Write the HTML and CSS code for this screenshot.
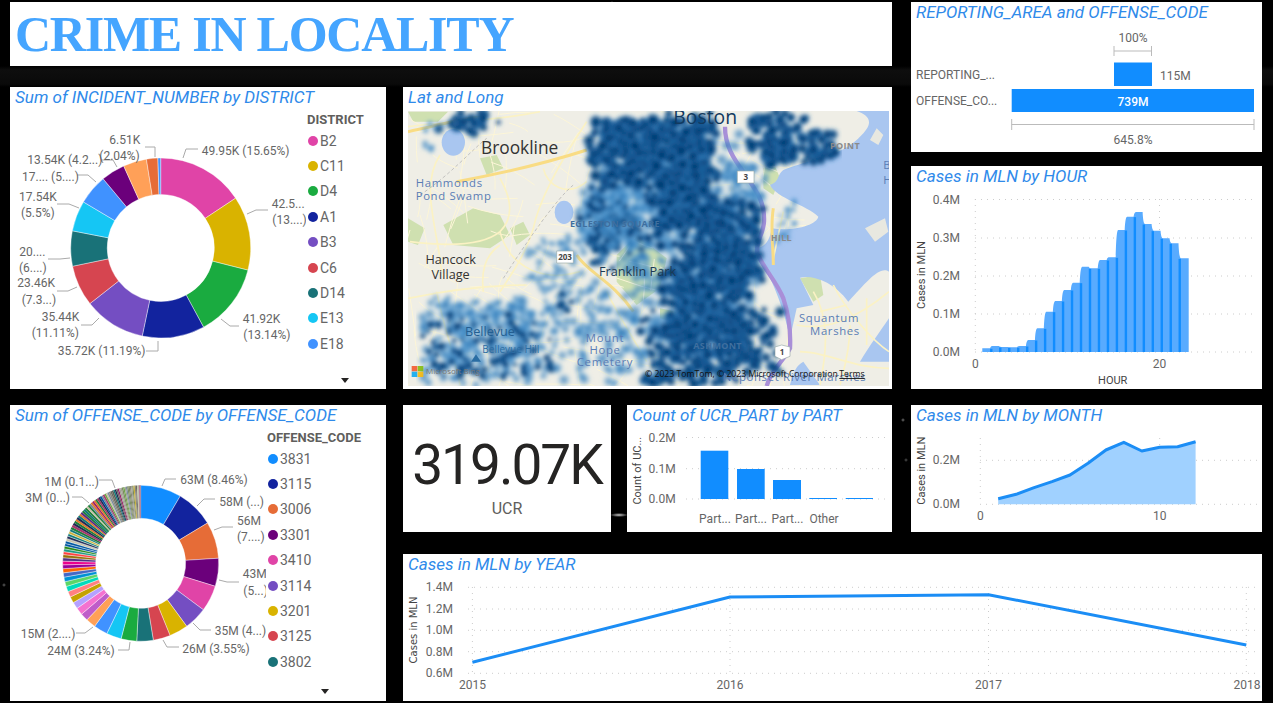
FILE: index.html
```html
<!DOCTYPE html>
<html lang="en">
<head>
<meta charset="utf-8">
<title>Crime in Locality</title>
<link rel="stylesheet" href="styles.css">
</head>
<body>
<main class="board">
  <section class="panel p-head"><h1 class="headline">CRIME IN LOCALITY</h1></section>

  <section class="panel p-report">
    <h2 class="title">REPORTING_AREA and OFFENSE_CODE</h2>
    <svg class="chart" viewBox="911 23 351 129">
      <text class="lbl mid" x="1133" y="42">100%</text>
      <path class="bracket" d="M1114 46v10M1114 51h37.500M1151.500 46v10M1011.700 119v11M1011.700 124.500H1254M1254 119v11"/>
      <rect class="bar" x="1114" y="62.500" width="38" height="23.500"/>
      <rect class="bar" x="1011.700" y="89" width="242.300" height="23"/>
      <text class="lbl" x="916" y="79">REPORTING_...</text>
      <text class="lbl" x="916" y="105">OFFENSE_CO...</text>
      <text class="lbl" x="1160" y="80">115M</text>
      <text class="lbl mid white" x="1133" y="106">739M</text>
      <text class="lbl mid" x="1133" y="144">645.8%</text>
    </svg>
  </section>

  <section class="panel p-district">
    <h2 class="title">Sum of INCIDENT_NUMBER by DISTRICT</h2>
    <div class="donut-row">
      <svg class="chart donut-svg" viewBox="10 108 296 281">
        <g id="donut-district"></g>
        <path class="leader" d="M183 158l3-9h12M247 214l9-4h12M221 319l9 7h9M158 341v10h-12M99 318l-7 7H81M77 287l-9 4H57M70 258l-10 1H48M79 208l-10-4H57M96 182l-8-7H77M117 167l-4-7h-12M155 157v-10h-10"/>
        <text class="lbl" x="201.700" y="155">49.95K (15.65%)</text>
        <text class="lbl" x="271.700" y="208">42.5...</text>
        <text class="lbl" x="272.300" y="224">(13....)</text>
        <text class="lbl" x="242.700" y="323">41.92K</text>
        <text class="lbl" x="243.300" y="339">(13.14%)</text>
        <text class="lbl" x="57.700" y="355">35.72K (11.19%)</text>
        <text class="lbl" x="41.700" y="321">35.44K</text>
        <text class="lbl" x="31.700" y="337">(11.11%)</text>
        <text class="lbl" x="17.300" y="287">23.46K</text>
        <text class="lbl" x="21.700" y="304">(7.3...)</text>
        <text class="lbl" x="19.300" y="256">20....</text>
        <text class="lbl" x="19" y="272">(6....)</text>
        <text class="lbl" x="19" y="201">17.54K</text>
        <text class="lbl" x="21" y="217">(5.5%)</text>
        <text class="lbl" x="22" y="181">17.... (5....)</text>
        <text class="lbl" x="27.300" y="164">13.54K (4.2...)</text>
        <text class="lbl" x="109.300" y="144">6.51K</text>
        <text class="lbl" x="99.300" y="160">(2.04%)</text>
      </svg>
      <aside class="legend legend-district">
        <h3 class="legend-title">DISTRICT</h3>
        <ul class="legend-list">
          <li><i class="dot c-pink"></i>B2</li>
          <li><i class="dot c-gold"></i>C11</li>
          <li><i class="dot c-green"></i>D4</li>
          <li><i class="dot c-navy"></i>A1</li>
          <li><i class="dot c-violet"></i>B3</li>
          <li><i class="dot c-red"></i>C6</li>
          <li><i class="dot c-teal"></i>D14</li>
          <li><i class="dot c-cyan"></i>E13</li>
          <li><i class="dot c-sky"></i>E18</li>
        </ul>
        <span class="more"></span>
      </aside>
    </div>
  </section>

  <section class="panel p-map">
    <h2 class="title">Lat and Long</h2>
    <svg class="map" viewBox="24 78 1443 825" preserveAspectRatio="none">
      <defs>
        <radialGradient id="heat-dark">
          <stop offset="0" stop-color="#02396f"/>
          <stop offset=".5" stop-color="#043f78" stop-opacity=".9"/>
          <stop offset=".8" stop-color="#2a78ba" stop-opacity=".4"/>
          <stop offset="1" stop-color="#5ea6dc" stop-opacity="0"/>
        </radialGradient>
        <radialGradient id="heat-light">
          <stop offset="0" stop-color="#15609f" stop-opacity=".8"/>
          <stop offset=".55" stop-color="#4a94cf" stop-opacity=".5"/>
          <stop offset="1" stop-color="#8cc4ea" stop-opacity="0"/>
        </radialGradient>
        <filter id="soft" x="0" y="0" width="100%" height="100%">
          <feGaussianBlur stdDeviation="6"/>
        </filter>
      </defs>
      <rect class="land" x="24" y="78" width="1443" height="825"/>
      <path class="park" d="M130 420l90-50 80 20 30 60-60 40-110-10zM24 400l50 30-20 50-30-10zM650 510l60-60 90 70-20 90-70 50-60-70zM240 220l50-10 20 40-50 20zM330 430l40-20 20 40-40 30zM1090 250l30-20 20 50-20 50-30-20zM1200 580l60-10 10 60-30 20zM780 670l50 10-10 30-40-10zM24 80h120l-30 30H40z"/>
      <g id="streets"></g>
      <path class="road" d="M24 125C120 110 280 110 420 80M120 210C60 300 110 420 125 560M30 470C110 480 240 490 300 440 360 380 310 300 300 280M300 440C320 520 400 600 540 560M250 620C240 540 270 500 300 480M560 110C500 200 420 330 400 430 380 500 340 560 300 620M430 250C440 300 500 340 560 290M24 640C120 620 240 600 380 600M110 620C130 720 160 800 180 900M620 620C660 700 700 760 740 830M840 200L760 300"/>
      <path class="water" d="M1150 255C1220 225 1330 215 1385 150 1425 110 1405 90 1370 78H1467V560C1440 540 1400 590 1345 650 1300 590 1240 570 1200 578L1240 660 1190 670 1170 760C1150 660 1110 570 1065 490 1090 490 1110 470 1115 430 1180 440 1250 420 1255 395 1220 360 1130 340 1110 300 1140 290 1130 270 1150 255ZM1467 700V830H1380C1410 780 1440 740 1467 700ZM1170 900C1180 860 1190 840 1210 830L1260 900Z"/>
      <path class="pale" d="M1395 430l60-30 10 40-40 30zM1430 130l20 20-15 30-25-15z"/>
      <ellipse class="water" cx="160" cy="172" rx="35" ry="40"/>
      <ellipse class="water" cx="492" cy="382" rx="28" ry="35"/>
      <path class="road" d="M1240 620C1290 700 1280 800 1260 900M1190 720C1280 740 1370 700 1467 620M1300 600C1340 680 1420 770 1467 800M1200 800C1280 800 1360 850 1467 850M1350 720C1350 800 1330 860 1320 900M1400 640L1400 780M1260 680L1340 660M1150 380L1120 520"/>
      <path class="road major" d="M24 140C100 125 180 100 250 95M170 290C280 270 420 240 560 195M530 510C560 560 640 590 700 680M1120 370C1110 430 1120 480 1120 540"/>
      <path class="rail" d="M60 330C150 270 210 200 260 160M310 580C380 470 470 340 520 300"/>
      <path class="route" d="M975 125C975 180 1000 220 1030 260 1070 320 1095 350 1092 410 1090 450 1065 470 1072 505 1090 550 1130 590 1150 640 1170 700 1172 750 1170 790 1150 830 1115 850 1100 903"/>
      <g id="heat" filter="url(#soft)"></g>
      <text class="ml-city" x="243" y="208">Brookline</text>
      <text class="ml-water" x="47" y="307">Hammonds</text>
      <text class="ml-water" x="47" y="346">Pond Swamp</text>
      <text class="ml-town mid" x="152" y="537">Hancock</text>
      <text class="ml-town mid" x="152" y="582">Village</text>
      <text class="ml-town dark" x="597" y="572">Franklin Park</text>
      <text class="ml-hood" x="510" y="425">EGLESTON SQUARE</text>
      <text class="ml-town blue" x="195" y="752">Bellevue</text>
      <text class="ml-small blue" x="247" y="803">Bellevue Hill</text>
      <text class="ml-water mid" x="615" y="771">Mount</text>
      <text class="ml-water mid" x="615" y="807">Hope</text>
      <text class="ml-water mid" x="615" y="843">Cemetery</text>
      <text class="ml-water mid" x="1287" y="710">Squantum</text>
      <text class="ml-water mid" x="1305" y="749">Marshes</text>
      <text class="ml-boston" x="820" y="118">Boston</text>
      <text class="ml-hood grey" x="1290" y="191">POINT</text>
      <text class="ml-hood grey" x="1112" y="467">HILL</text>
      <text class="ml-hood" x="880" y="792">ASHMONT</text>
      <text class="ml-water" x="968" y="889">Neponset River Marshes</text>
      <text class="ml-water" x="1450" y="252">B</text>
      <text class="ml-water" x="1450" y="297">H</text>
      <path class="hill" d="M228 808l15 22h-30z"/>
      <path class="shield" d="M1012 258h50v36h-50zM470 498h50v36h-50z"/>
      <path class="shield" d="M1125 786l20-6 25 6v28l-25 10-20-10z"/>
      <text class="ml-shield mid" x="1037" y="285">3</text>
      <text class="ml-shield mid" x="495" y="525">203</text>
      <text class="ml-shield mid" x="1146" y="810">1</text>
      <rect class="ms ms1" x="35" y="843" width="17" height="16"/>
      <rect class="ms ms2" x="53" y="843" width="17" height="16"/>
      <rect class="ms ms3" x="35" y="860" width="17" height="16"/>
      <rect class="ms ms4" x="53" y="860" width="17" height="16"/>
      <text class="ml-bing" x="78" y="866">Microsoft Bing</text>
      <text class="ml-copy" x="735" y="876">© 2023 TomTom, © 2023 Microsoft Corporation</text>
      <text class="ml-copy terms" x="1318" y="876">Terms</text>
    </svg>
  </section>

  <section class="panel p-hour">
    <h2 class="title">Cases in MLN by HOUR</h2>
    <svg class="chart" viewBox="911 187 351 202">
      <path class="grid" d="M975 199.500H1256M975 238H1256M975 276H1256M975 314H1256M975 352H1256M975.300 199V352M1159.500 199V352"/>
      <path id="hour-area" class="hour-area" d=""/>
      <g id="hour-stripes"></g>
      <text class="lbl end" x="960" y="203.500">0.4M</text>
      <text class="lbl end" x="960" y="242">0.3M</text>
      <text class="lbl end" x="960" y="280">0.2M</text>
      <text class="lbl end" x="960" y="318">0.1M</text>
      <text class="lbl end" x="960" y="356">0.0M</text>
      <text class="lbl mid" x="975.300" y="368">0</text>
      <text class="lbl mid" x="1159.500" y="368">20</text>
      <text class="axis mid" x="1112.700" y="384">HOUR</text>
      <text class="axis mid" transform="translate(925 275) rotate(-90)">Cases in MLN</text>
    </svg>
  </section>

  <section class="panel p-offense">
    <h2 class="title">Sum of OFFENSE_CODE by OFFENSE_CODE</h2>
    <div class="donut-row">
      <svg class="chart donut-svg" viewBox="10 426 256 275">
        <g id="donut-offense"></g>
        <path class="leader" d="M162 486l3-7h11M197 506l7-7h11M214 530l8-3h11M219 580l8 2h12M193 623l7 7h11M163 640l4 7h12M130 642l-1 8h-11M93 627l-8 6h-9M89 503l-7-6H72M115 488l-3-8H99"/>
        <text class="lbl" x="180.300" y="484">63M (8.46%)</text>
        <text class="lbl" x="219.300" y="506">58M (...)</text>
        <text class="lbl" x="237" y="525">56M</text>
        <text class="lbl" x="237" y="541">(7....)</text>
        <text class="lbl" x="242.700" y="578">43M</text>
        <text class="lbl" x="243.300" y="595">(5...)</text>
        <text class="lbl" x="214.700" y="635">35M (4...)</text>
        <text class="lbl" x="182.300" y="653">26M (3.55%)</text>
        <text class="lbl" x="47.300" y="655">24M (3.24%)</text>
        <text class="lbl" x="20.700" y="638">15M (2....)</text>
        <text class="lbl" x="25.300" y="502">3M (0...)</text>
        <text class="lbl" x="44.300" y="486">1M (0.1...)</text>
      </svg>
      <aside class="legend legend-offense">
        <h3 class="legend-title">OFFENSE_CODE</h3>
        <ul class="legend-list">
          <li><i class="dot c-blue"></i>3831</li>
          <li><i class="dot c-navy"></i>3115</li>
          <li><i class="dot c-orange"></i>3006</li>
          <li><i class="dot c-plum"></i>3301</li>
          <li><i class="dot c-pink"></i>3410</li>
          <li><i class="dot c-violet"></i>3114</li>
          <li><i class="dot c-gold"></i>3201</li>
          <li><i class="dot c-red"></i>3125</li>
          <li><i class="dot c-teal"></i>3802</li>
        </ul>
        <span class="more"></span>
      </aside>
    </div>
  </section>

  <section class="panel p-kpi">
    <div class="kpi-value">319.07K</div>
    <div class="kpi-label">UCR</div>
  </section>

  <section class="panel p-ucr">
    <h2 class="title">Count of UCR_PART by PART</h2>
    <svg class="chart" viewBox="627 426 265 106">
      <path class="grid" d="M686 437.500H885M686 468.700H885M686 499H885"/>
      <rect class="bar" x="700.700" y="450.700" width="27.600" height="48.300"/>
      <rect class="bar" x="737" y="469" width="27.700" height="30"/>
      <rect class="bar" x="773" y="480" width="28" height="19"/>
      <rect class="bar" x="809.300" y="498" width="27.700" height="1"/>
      <rect class="bar" x="845.700" y="498" width="27.300" height="1"/>
      <text class="lbl end" x="675.700" y="441.500">0.2M</text>
      <text class="lbl end" x="675.700" y="472.700">0.1M</text>
      <text class="lbl end" x="675.700" y="503">0.0M</text>
      <text class="lbl mid" x="715" y="523">Part...</text>
      <text class="lbl mid" x="751" y="523">Part...</text>
      <text class="lbl mid" x="787.500" y="523">Part...</text>
      <text class="lbl mid" x="824" y="523">Other</text>
      <text class="axis mid" transform="translate(641 470.700) rotate(-90)">Count of UC...</text>
    </svg>
  </section>

  <section class="panel p-month">
    <h2 class="title">Cases in MLN by MONTH</h2>
    <svg class="chart" viewBox="911 426 351 106">
      <path class="grid" d="M980 460.300H1258M980 504.300H1258M980.300 438V504M1159.700 438V504"/>
      <path class="month-area" d="M998.200 504.300V498.700L1016.200 494.300 1034.100 487.700 1052 481.700 1070 475 1088 463.300 1105.900 450 1123.800 442.300 1141.800 451 1159.700 447.300 1177.600 446.700 1195.600 441.700V504.300Z"/>
      <path class="month-line" d="M998.200 498.700L1016.200 494.300 1034.100 487.700 1052 481.700 1070 475 1088 463.300 1105.900 450 1123.800 442.300 1141.800 451 1159.700 447.300 1177.600 446.700 1195.600 441.700"/>
      <text class="lbl end" x="960" y="464.300">0.2M</text>
      <text class="lbl end" x="960" y="508.300">0.0M</text>
      <text class="lbl mid" x="980.300" y="520">0</text>
      <text class="lbl mid" x="1159.700" y="520">10</text>
      <text class="axis mid" transform="translate(925 470.700) rotate(-90)">Cases in MLN</text>
    </svg>
  </section>

  <section class="panel p-year">
    <h2 class="title">Cases in MLN by YEAR</h2>
    <svg class="chart" viewBox="403 575 859 126">
      <path class="grid" d="M468 587.300H1258M468 609H1258M468 630.300H1258M468 651.700H1258M468 673.300H1258M472.400 587V673M730 587V673M988.500 587V673M1246.300 587V673"/>
      <path class="year-line" d="M472.400 662.300L730 597 988.500 594.700 1246.300 645"/>
      <text class="lbl end" x="453" y="591.300">1.4M</text>
      <text class="lbl end" x="453" y="613">1.2M</text>
      <text class="lbl end" x="453" y="634.300">1.0M</text>
      <text class="lbl end" x="453" y="655.700">0.8M</text>
      <text class="lbl end" x="453" y="677.300">0.6M</text>
      <text class="lbl mid" x="472.400" y="688.500">2015</text>
      <text class="lbl mid" x="730" y="688.500">2016</text>
      <text class="lbl mid" x="988.500" y="688.500">2017</text>
      <text class="lbl mid" x="1247" y="688.500">2018</text>
      <text class="axis-small mid" transform="translate(417 630) rotate(-90)">Cases in MLN</text>
    </svg>
  </section>
</main>
<script src="app.js"></script>
</body>
</html>
```
FILE: styles.css
```css
* { box-sizing: border-box; }
html, body { margin: 0; height: 100%; }
body {
  background-color: #000;
  background-image:
    radial-gradient(ellipse 9px 2px at 619px 515px, #ccc 0, #666 50%, transparent 100%),
    radial-gradient(circle at 612px 3px, #666 0, transparent 2px),
    radial-gradient(circle at 4px 585px, #666 0, transparent 2px),
    radial-gradient(circle at 903px 420px, #777 0, transparent 2px),
    radial-gradient(circle at 906px 460px, #555 0, transparent 2px),
    linear-gradient(#000 66px, #0e0e0e 70px, #0a0a0a 84px, #000 87px);
  overflow: hidden;
  font-family: Roboto, "Liberation Sans", sans-serif;
}
.board {
  display: grid;
  grid-template-columns: 376px 17px 208px 16px 265px 19px 351px;
  grid-template-rows: 64px 21px 65px 14px 223px 16px 127px 22px 147px;
  padding: 2px 0 0 10px;
}
.panel {
  background: #fff;
  display: flex;
  flex-direction: column;
  min-width: 0;
  min-height: 0;
  overflow: hidden;
}
.p-head { grid-column: 1 / 6; grid-row: 1; justify-content: center; padding-left: 5px; }
.p-report { grid-column: 7; grid-row: 1 / 4; }
.p-hour { grid-column: 7; grid-row: 5; }
.p-district { grid-column: 1; grid-row: 3 / 6; }
.p-map { grid-column: 3 / 6; grid-row: 3 / 6; }
.p-offense { grid-column: 1; grid-row: 7 / 10; }
.p-kpi { grid-column: 3; grid-row: 7; align-items: center; }
.p-ucr { grid-column: 5; grid-row: 7; }
.p-month { grid-column: 7; grid-row: 7; }
.p-year { grid-column: 3 / 8; grid-row: 9; }

.headline {
  margin: 0;
  font: bold 50px/1 "Liberation Serif", serif;
  letter-spacing: -1.250px;
  color: #45a5ff;
  white-space: nowrap;
}
.title {
  margin: 0;
  height: 21px;
  flex: none;
  padding-left: 5px;
  font: italic 400 17px/21px Roboto, sans-serif;
  color: #2f8aea;
  white-space: nowrap;
}
.chart { display: block; flex: 1; width: 100%; min-height: 0; }
.donut-row { display: flex; flex: 1; min-height: 0; }
.donut-svg { flex: none; }
.p-district .donut-svg { width: 296px; height: 281px; }
.p-offense .donut-svg { width: 256px; height: 275px; }

.legend { flex: 1; display: flex; flex-direction: column; color: #666; }
.legend-district { padding-left: 1px; }
.legend-offense { padding-left: 1px; }
.legend-title {
  margin: 4px 0 0;
  font: 700 13px/16px Roboto, sans-serif;
  color: #605e5c;
}
.legend-list { list-style: none; margin: 0; padding: 0; display: flex; flex-direction: column; }
.legend-list li {
  height: 25.400px;
  display: flex;
  align-items: center;
  gap: 2px;
  font: 14px/1 Roboto, sans-serif;
}
.dot { width: 10px; height: 10px; border-radius: 50%; flex: none; margin-left: 1px; }
.more {
  width: 0; height: 0;
  margin: auto 0 6px 34px;
  border: solid transparent;
  border-width: 5px 4.500px 0;
  border-top-color: #252423;
}
.legend-offense .more { margin-left: 54px; margin-bottom: 7px; }
.c-blue { background: #118dff; }
.c-navy { background: #12239e; }
.c-orange { background: #e66c37; }
.c-plum { background: #6b007b; }
.c-pink { background: #e044a7; }
.c-violet { background: #744ec2; }
.c-gold { background: #d9b300; }
.c-red { background: #d64550; }
.c-teal { background: #197278; }
.c-green { background: #1aab40; }
.c-cyan { background: #15c6f4; }
.c-sky { background: #4092ff; }

.lbl { font: 12px Roboto, sans-serif; fill: #666; }
.axis { font: 11px Roboto, sans-serif; fill: #444; }
.axis-small { font: 10px "DejaVu Sans", sans-serif; fill: #444; }
.mid { text-anchor: middle; }
.end { text-anchor: end; }
.white { fill: #fff; font-weight: 500; }
.leader { fill: none; stroke: #aaa; stroke-width: 1; }
.bracket { fill: none; stroke: #bbb; stroke-width: 1; }
.bar { fill: #118dff; }
.grid { fill: none; stroke: #ccc; stroke-width: 1; stroke-dasharray: 1 5; }
.hour-area { fill: #58abff; }
.hour-stripe { fill: #118dff; }
.month-area { fill: #a0d1ff; }
.month-line { fill: none; stroke: #1b8df5; stroke-width: 3; stroke-linejoin: round; }
.year-line { fill: none; stroke: #1b8df5; stroke-width: 3; stroke-linejoin: round; }
.slice { stroke: #fff; stroke-width: .4; }
.slice-thin { stroke: none; }

.p-map .title { height: 24px; }
.map { display: block; width: 481px; height: 275px; margin-left: 5px; flex: none; }
.land { fill: #efeee6; }
.park { fill: #cfe0b0; }
.water { fill: #a9c6f0; }
.pale { fill: #e8e8e0; }
.road { fill: none; stroke: #fbf2c4; stroke-width: 5; }
.street { fill: none; stroke: #fdf6d8; stroke-width: 3; }
.major { stroke: #f9dc84; stroke-width: 9; }
.rail { fill: none; stroke: #aaa; stroke-width: 2; stroke-dasharray: 10 7; }
.route { fill: none; stroke: #a98fd8; stroke-width: 13; }
.ml-city { font: 52px "Open Sans", sans-serif; fill: #333; }
.ml-town { font: 38px "Open Sans", sans-serif; fill: #333; }
.ml-town.dark { fill: #1c3a55; }
.ml-town.blue { fill: #245f92; }
.ml-water { font: 34px "Open Sans", sans-serif; fill: #5a7db5; letter-spacing: 2px; }
.ml-small { font: 30px "Open Sans", sans-serif; }
.ml-small.blue { fill: #2c6da3; }
.ml-hood { font: bold 27px "Open Sans", sans-serif; fill: #3f6f9f; letter-spacing: 1px; }
.ml-hood.grey { fill: #8a8a8a; }
.ml-boston { font: 58px "Open Sans", sans-serif; fill: #123a60; }
.hill { fill: #2a6da3; }
.shield { fill: #fff; stroke: #9aa; stroke-width: 2; }
.ml-shield { font: bold 24px "Open Sans", sans-serif; fill: #444; }
.ms { opacity: .85; }
.ms1 { fill: #f25022; }
.ms2 { fill: #7fba00; }
.ms3 { fill: #00a4ef; }
.ms4 { fill: #ffb900; }
.ml-bing { font: 24px "Open Sans", sans-serif; fill: #777; }
.ml-copy { font: 26px "Open Sans", sans-serif; fill: #111; }
.terms { text-decoration: underline; }

.kpi-value {
  margin-top: 27px;
  font: 400 55px/66px Roboto, sans-serif;
  letter-spacing: -2px;
  color: #252423;
}
.kpi-label { margin-top: 1px; font: 16px/20px Roboto, sans-serif; color: #605e5c; }
```
FILE: app.js
```javascript
(function () {
  var NS = 'http://www.w3.org/2000/svg';
  function el(parent, name, attrs) {
    var n = document.createElementNS(NS, name);
    for (var k in attrs) n.setAttribute(k, attrs[k]);
    parent.appendChild(n);
    return n;
  }
  function rng(seed) {
    return function () {
      seed |= 0; seed = seed + 0x6D2B79F5 | 0;
      var t = Math.imul(seed ^ seed >>> 15, 1 | seed);
      t = t + Math.imul(t ^ t >>> 7, 61 | t) ^ t;
      return ((t ^ t >>> 14) >>> 0) / 4294967296;
    };
  }
  function donut(group, cx, cy, R, r, items) {
    var total = items.reduce(function (s, i) { return s + i[0]; }, 0), a = -Math.PI / 2;
    items.forEach(function (it) {
      var b = a + it[0] / total * Math.PI * 2, large = b - a > Math.PI ? 1 : 0;
      var d = 'M' + (cx + R * Math.cos(a)) + ' ' + (cy + R * Math.sin(a)) +
        'A' + R + ' ' + R + ' 0 ' + large + ' 1 ' + (cx + R * Math.cos(b)) + ' ' + (cy + R * Math.sin(b)) +
        'L' + (cx + r * Math.cos(b)) + ' ' + (cy + r * Math.sin(b)) +
        'A' + r + ' ' + r + ' 0 ' + large + ' 0 ' + (cx + r * Math.cos(a)) + ' ' + (cy + r * Math.sin(a)) + 'Z';
      el(group, 'path', { d: d, fill: it[1], 'class': it[0] < 0.5 ? 'slice-thin' : 'slice' });
      a = b;
    });
  }
  donut(document.getElementById('donut-district'), 160.7, 248, 90, 53.5, [
    [15.65, '#e044a7'], [13.3, '#d9b300'], [13.14, '#1aab40'], [11.19, '#12239e'], [11.11, '#744ec2'],
    [7.35, '#d64550'], [6.3, '#197278'], [5.5, '#15c6f4'], [5.4, '#4092ff'], [4.3, '#6b007b'],
    [4.2, '#ffa058'], [2.04, '#e66c37'], [0.5, '#4092ff']
  ]);

  var offense = [
    [8.46, '#118dff'], [7.9, '#12239e'], [7.6, '#e66c37'], [5.8, '#6b007b'], [5.4, '#e044a7'], [4.8, '#744ec2'],
    [3.9, '#d9b300'], [3.55, '#d64550'], [3.4, '#197278'], [3.24, '#1aab40'], [3.1, '#15c6f4'], [2.9, '#4092ff'],
    [2.05, '#ffa058'], [1.6, '#be5dc9'], [1.5, '#f472d0'], [1.4, '#b5a1ff'], [1.3, '#c4a200'], [1.2, '#ff8080'],
    [1.1, '#00dbbc'], [1.0, '#5bd667'], [0.95, '#0091d5'], [0.9, '#4668c5'], [0.85, '#ff6300'], [0.8, '#99009a'],
    [0.75, '#ec008c'], [0.7, '#533285'], [0.65, '#99700a'], [0.6, '#ff4141'], [0.6, '#1f9a85'], [0.55, '#25891c']
  ];
  var pal = ['#0057a2', '#9d1f6b', '#e0792b', '#1f7f3a', '#5b2a86', '#c9b037', '#127a7a', '#a8396b', '#6ea84a', '#222a55', '#e8d66a', '#7a8aa0', '#c7c2a8'];
  var rand = rng(7), size = 0.55, guard = 0, sum = offense.reduce(function (s, i) { return s + i[0]; }, 0);
  while (sum < 100 && guard++ < 200) {
    var p = pal[Math.floor(rand() * pal.length)];
    if (sum > 92 && rand() < 0.6) p = ['#6a6a60', '#88887c', '#5d5f56', '#a0a294', '#7c8a60'][Math.floor(rand() * 5)];
    var s = Math.min(size, 100 - sum);
    offense.push([s, p]);
    sum += s;
    size = Math.max(0.16, size * 0.985);
  }
  donut(document.getElementById('donut-offense'), 140.7, 563.3, 78, 45, offense);

  // Hour area: stepped columns with softened shoulders.
  var tops = [1045, 1038, 1041, 1042, 1038, 1020, 985, 935, 903, 870, 848, 800, 805, 780, 772, 690, 650, 636, 672, 692, 715, 730, 775]
    .map(function (v) { return v / 3; });
  var x0 = 982.3, w = (1188.7 - x0) / tops.length, base = 352;
  var d = 'M' + x0 + ' ' + base + 'V' + tops[0];
  tops.forEach(function (t, i) {
    var x = x0 + w * i;
    if (i) d += 'C' + (x - 1.2) + ' ' + tops[i - 1] + ' ' + (x - 0.8) + ' ' + t + ' ' + (x + 1.2) + ' ' + t;
    d += 'L' + (x + w - 1.2) + ' ' + t;
  });
  d += 'L' + (x0 + w * tops.length) + ' ' + tops[tops.length - 1] + 'V' + base + 'Z';
  document.getElementById('hour-area').setAttribute('d', d);
  var stripes = document.getElementById('hour-stripes');
  tops.forEach(function (t, i) {
    if (i === 0) return;
    var x = x0 + w * i, top = Math.max(t, tops[i - 1]) + 0.5;
    el(stripes, 'rect', { x: x - 1.2, y: top, width: 2.4, height: base - top, 'class': 'hour-stripe' });
  });

  // Street net under the heat layer, in map units.
  var streets = document.getElementById('streets'), r3 = rng(11);
  for (var n = 0; n < 230; n++) {
    var sx = 24 + r3() * 1180, sy = 78 + r3() * 825;
    var ang = (r3() < 0.5 ? 0.3 : 1.8) + (r3() - 0.5) * 0.8, len = 50 + r3() * 130;
    var ex = sx + Math.cos(ang) * len, ey = sy + Math.sin(ang) * len;
    el(streets, 'path', {
      d: 'M' + sx.toFixed(0) + ' ' + sy.toFixed(0) + 'Q' + ((sx + ex) / 2 + (r3() - 0.5) * 30).toFixed(0) + ' ' + ((sy + ey) / 2 + (r3() - 0.5) * 30).toFixed(0) + ' ' + ex.toFixed(0) + ' ' + ey.toFixed(0),
      'class': 'street'
    });
  }

  // Heat map blobs, in map units, with street-scale gaps.
  var heat = document.getElementById('heat'), r2 = rng(42);
  function gap(x, y) {
    var u = x + 30 * Math.sin(y * 0.023) + 14 * Math.sin(y * 0.071);
    var v = y + 30 * Math.sin(x * 0.019) + 14 * Math.sin(x * 0.063);
    var a = Math.sin(u * 0.075) * Math.sin(v * 0.08);
    var b = Math.sin((u + v) * 0.043 + 1.2) * Math.sin((u - v) * 0.051);
    return a + 0.7 * b > 0.42;
  }
  function scatter(x1, y1, x2, y2, n, grad, rMin, rMax) {
    for (var i = 0; i < n; i++) {
      var px = x1 + (r2() * 0.7 + r2() * 0.3) * (x2 - x1);
      var py = y1 + (r2() * 0.8 + r2() * 0.2) * (y2 - y1);
      if (grad === 'heat-dark' && gap(px, py) && r2() < 0.9) continue;
      var rad = rMin + r2() * (rMax - rMin);
      el(heat, 'circle', { cx: px.toFixed(1), cy: py.toFixed(1), r: rad.toFixed(1), fill: 'url(#' + grad + ')' });
    }
  }
  scatter(30, 620, 500, 903, 300, 'heat-light', 10, 22);
  scatter(30, 680, 470, 903, 130, 'heat-dark', 8, 17);
  scatter(100, 78, 310, 150, 40, 'heat-dark', 10, 20);
  scatter(60, 100, 130, 210, 12, 'heat-light', 8, 14);
  scatter(370, 440, 560, 640, 60, 'heat-light', 10, 18);
  scatter(520, 290, 760, 490, 170, 'heat-light', 12, 24);
  scatter(530, 300, 740, 560, 90, 'heat-dark', 10, 19);
  scatter(460, 600, 720, 903, 90, 'heat-light', 10, 20);
  scatter(460, 620, 520, 680, 12, 'heat-dark', 10, 18);
  scatter(560, 90, 1090, 890, 350, 'heat-light', 14, 26);
  scatter(550, 100, 800, 310, 300, 'heat-dark', 13, 25);
  scatter(730, 78, 960, 470, 600, 'heat-dark', 13, 26);
  scatter(860, 330, 1095, 640, 400, 'heat-dark', 13, 25);
  scatter(770, 470, 1060, 800, 500, 'heat-dark', 12, 24);
  scatter(700, 650, 1170, 885, 420, 'heat-dark', 11, 22);
  scatter(950, 230, 1100, 340, 40, 'heat-light', 10, 22);
  scatter(1035, 78, 1225, 250, 170, 'heat-dark', 12, 23);
  scatter(1200, 130, 1340, 235, 70, 'heat-dark', 10, 20);
  scatter(1110, 340, 1200, 480, 20, 'heat-light', 8, 14);
  scatter(600, 850, 1100, 903, 40, 'heat-dark', 12, 22);
})();
```
